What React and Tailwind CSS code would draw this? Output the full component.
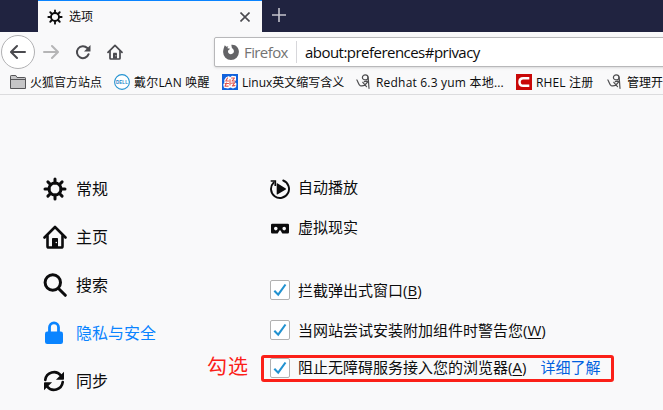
import React from "react";

const Gear = ({ className, heavy }) => (
  <svg viewBox="0 0 24 24" className={className} fill="none" stroke="currentColor" strokeLinecap="round" strokeWidth={heavy ? 3 : 2.8}>
    <circle cx="12" cy="12" r="6" />
    <path d="M12 2v4M12 18v4M2 12h4M18 12h4M4.9 4.9l2.6 2.6M16.5 16.5l2.6 2.6M4.9 19.1l2.6-2.6M16.5 7.5l2.6-2.6" />
  </svg>
);

const Home = ({ className }) => (
  <svg viewBox="0 0 24 24" className={className} fill="none" stroke="currentColor" strokeWidth="2.6" strokeLinecap="round" strokeLinejoin="round">
    <path d="M1.5 12.5L12 2l10.5 10.5" />
    <path d="M4.5 11v10.2a1.3 1.3 0 0 0 1.3 1.3h12.4a1.3 1.3 0 0 0 1.3-1.3V11" />
    <path d="M9 22v-8.3a.7.7 0 0 1 .7-.7h4.6a.7.7 0 0 1 .7.7V22z" fill="currentColor" stroke="none" />
    <circle cx="13.3" cy="17.5" r=".8" fill="#f9f9fa" stroke="none" />
  </svg>
);

const SearchIcon = ({ className }) => (
  <svg viewBox="0 0 24 24" className={className} fill="none" stroke="currentColor" strokeWidth="3" strokeLinecap="round">
    <circle cx="9.8" cy="9.5" r="7.7" />
    <path d="M15.5 15.5l6.8 6.8" />
  </svg>
);

const Lock = ({ className }) => (
  <svg viewBox="0 0 24 24" className={className}>
    <rect x="2" y="10.5" width="18" height="12.5" rx="2.2" fill="currentColor" />
    <path d="M6.5 12V6.3a4.5 4.5 0 0 1 9 0V12" fill="none" stroke="currentColor" strokeWidth="2.8" />
  </svg>
);

const Sync = ({ className }) => (
  <svg viewBox="0 0 24 24" className={className} fill="none" stroke="currentColor" strokeWidth="2.9">
    <path d="M2.5 10.8A9.6 9.6 0 0 1 19.5 6M21.5 13.2A9.6 9.6 0 0 1 4.5 18" strokeLinecap="round" />
    <path d="M22.9 1.8v8a.8.8 0 0 1-.8.8h-8zM1.1 22.2v-8a.8.8 0 0 1 .8-.8h8z" fill="currentColor" stroke="none" />
  </svg>
);

const Autoplay = () => (
  <svg viewBox="0 0 20 20" className="h-5 w-5" fill="none" stroke="#0c0c0d">
    <path d="M13.2 1.5a9 9 0 1 1-9.6 2.1" strokeWidth="1.9" strokeLinecap="round" />
    <path d="M.7 2h4.6v4.9" strokeWidth="1.7" />
    <path d="M6.7 4.6v10.6a.4.4 0 0 0 .6.3l8.5-5.1a.5.5 0 0 0 0-.8L7.3 4.3a.4.4 0 0 0-.6.3z" fill="#0c0c0d" stroke="none" />
  </svg>
);

const Headset = () => (
  <svg viewBox="0 0 20 20" className="h-5 w-5">
    <path fill="#0c0c0d" fillRule="evenodd" d="M2.3 5.8h15.4a1.3 1.3 0 0 1 1.3 1.3v7.2a1.3 1.3 0 0 1-1.3 1.3h-4.6a1.3 1.3 0 0 1-1.1-.7l-1.1-2a1 1 0 0 0-1.8 0l-1.1 2a1.3 1.3 0 0 1-1.1.7H2.3A1.3 1.3 0 0 1 1 14.3V7.1a1.3 1.3 0 0 1 1.3-1.3zM5.8 8.8a1.8 1.8 0 1 0 0 3.6 1.8 1.8 0 0 0 0-3.6zm8.4 0a1.8 1.8 0 1 0 0 3.6 1.8 1.8 0 0 0 0-3.6z" />
  </svg>
);

const Arrow = ({ className }) => (
  <svg viewBox="0 0 16 16" className={className} fill="none" stroke="currentColor" strokeWidth="2" strokeLinecap="round" strokeLinejoin="round">
    <path d="M15 8H1.5M7 2L1 8l6 6" />
  </svg>
);

const Reload = () => (
  <svg viewBox="0 0 16 16" className="h-4 w-4 text-[#4a4a4f]" fill="none" stroke="currentColor" strokeWidth="2">
    <path d="M13.6 10.2A6 6 0 1 1 12.3 4" strokeLinecap="round" />
    <path d="M15.5 1v6a.5.5 0 0 1-.5.5H9z" fill="currentColor" stroke="none" />
  </svg>
);

const FirefoxMark = () => (
  <svg viewBox="0 0 16 16" className="h-4 w-4 shrink-0">
    <path fill="#636366" fillRule="evenodd" d="M1.8 1.2l1.6 1.5 2-.5C4.8 3 4.5 3.6 4.5 4.2l2.7.5-1.8 1.6c-.6.7-.5 2.2.3 3 1.5 1.5 4.5.9 5.1-1.3.4-1.6-.3-3-1.9-4L8.3.8C13 .2 16 4 15.9 8A7.9 7.9 0 0 1 8 16 7.9 7.9 0 0 1 .1 8c0-2 .8-4.8 1.7-6.8z" />
  </svg>
);

const Folder = () => (
  <svg viewBox="0 0 16 14" className="h-[14px] w-4 shrink-0" fill="#c5c5c7" stroke="#555558">
    <path d="M.5 13.5V1.2a.7.7 0 0 1 .7-.7h4.6L7 2.5h7.8a.7.7 0 0 1 .7.7v10.3z" />
    <path d="M1 4.5h14" />
  </svg>
);

const Dell = () => (
  <svg viewBox="0 0 16 16" className="h-4 w-4 shrink-0">
    <circle cx="8" cy="8" r="7.4" fill="#fff" stroke="#2493d1" strokeWidth="1.1" />
    <text x="8" y="9.8" textAnchor="middle" textLength="12" lengthAdjust="spacingAndGlyphs" fontSize="4.8" fontWeight="700" fontFamily="Liberation Sans, sans-serif" fill="#1784c7">DELL</text>
  </svg>
);

const BlueSite = () => (
  <svg viewBox="0 0 16 16" className="h-4 w-4 shrink-0" fill="none" strokeLinecap="round" strokeLinejoin="round">
    <path fill="#1262dc" d="M0 0h16v16H0z" />
    <path fill="#fff" d="M4 3.2L7 2l1 1.2L10 1.8l4 .4v4L12.5 8l2 1.5-.5 3.8-3 1.2-2.5-1-2.5 1-4-.7-.8-3L2.5 8l-.3-2z" />
    <path stroke="#e0524c" strokeWidth="1.1" d="M5.5 4L3.8 7h2.7M3 9.5h3.5M4.5 9L3 12.3l3.2-.2M9.5 4h3l-2.5 3h3M9.3 9.3l3.4-.6-2.3 3.3 2.6-.4M8 5.5v5.5" />
  </svg>
);

const Figure = () => (
  <svg viewBox="0 0 16 16" className="h-4 w-4 shrink-0" fill="none" stroke="#4e4e50" strokeWidth="1.2" strokeLinecap="round">
    <ellipse cx="9.2" cy="3.4" rx="2.8" ry="2.5" />
    <path d="M12 2.8c.6 3 .5 6.5 1 11.5M8.3 7.6l3.8-.6M11.8 7.6c-2 3-4.6 5-7.6 4C2.6 11 2.2 8 .9 6M6.8 8.3l3.7 4.3" />
  </svg>
);

const CSite = () => (
  <svg viewBox="0 0 16 16" className="h-4 w-4 shrink-0">
    <path fill="#c90808" d="M0 0h16v16H0z" />
    <path d="M13.3 4.2H7.2C4.7 4.2 3.5 5.8 3.5 8s1.2 3.8 3.7 3.8h6.1" fill="none" stroke="#fff" strokeWidth="2.5" />
  </svg>
);

const Checkbox = () => (
  <span className="flex h-5 w-5 shrink-0 items-center justify-center rounded-[2px] border border-[#b1b1b1] bg-white">
    <svg viewBox="0 0 16 16" className="h-4 w-4" fill="none" stroke="#2292d0" strokeWidth="2.1">
      <path d="M2.3 8.7l3.9 4L13.5 2.5" />
    </svg>
  </span>
);

const bookmarks = [
  { icon: <Folder />, label: "火狐官方站点", cls: "w-[104px]" },
  { icon: <Dell />, label: "戴尔LAN 唤醒", cls: "w-[108px] tracking-[0.2px]" },
  { icon: <BlueSite />, label: "Linux英文缩写含义", cls: "w-[134px]" },
  { icon: <Figure />, label: "Redhat 6.3 yum 本地...", cls: "w-[160px] tracking-[0.2px]" },
  { icon: <CSite />, label: "RHEL 注册", cls: "w-[91px] tracking-[0.15px]" },
  { icon: <Figure />, label: "管理开始", cls: "w-[80px]" },
];

const categories = [
  { icon: <Gear className="h-6 w-6" heavy />, label: "常规" },
  { icon: <Home className="h-6 w-6" />, label: "主页" },
  { icon: <SearchIcon className="h-6 w-6" />, label: "搜索" },
  { icon: <Lock className="h-6 w-6" />, label: "隐私与安全", active: true },
  { icon: <Sync className="h-[22px] w-[22px]" />, label: "同步" },
];

export default function App() {
  return (
    <div className="flex h-[410px] w-[663px] flex-col overflow-hidden bg-[#f9f9fa] font-['Open_Sans','Noto_Sans_CJK_SC',sans-serif] text-[#0c0c0d]">
      <header className="flex h-8 shrink-0 bg-[#202340]">
        <div className="ml-[38px] flex w-[224px] items-center border-t border-[#0a84ff] bg-[#f9f9fa] pr-[12px] pl-[9px]">
          <Gear className="h-4 w-4" />
          <span className="ml-[6px] flex-1 text-xs">选项</span>
          <svg viewBox="0 0 10 10" className="h-[10px] w-[10px]" stroke="#4a4a4f" strokeWidth="1.6"><path d="M.5.5l9 9M9.5.5l-9 9" /></svg>
        </div>
        <svg viewBox="0 0 14 14" className="mt-2 ml-[10px] h-[14px] w-[14px]" stroke="#c3c3cc" strokeWidth="1.6"><path d="M7 0v14M0 7h14" /></svg>
      </header>

      <nav className="flex h-10 shrink-0 items-center overflow-hidden pl-px">
        <span className="flex h-[34px] w-[34px] shrink-0 items-center justify-center rounded-full border border-[#b1b1b3] bg-white text-[#4a4a4f]"><Arrow className="h-4 w-4" /></span>
        <Arrow className="ml-2 h-4 w-4 shrink-0 rotate-180 text-[#b5b5b6]" />
        <span className="ml-4 shrink-0"><Reload /></span>
        <Home className="ml-4 h-4 w-4 shrink-0 text-[#4a4a4f]" />
        <div className="ml-[91px] flex h-[30px] w-[470px] shrink-0 items-center rounded-[2px] border border-[#b8b8ba] bg-white pl-2 shadow-sm">
          <FirefoxMark />
          <span className="ml-[5px] w-[52px] text-[15px] tracking-[-0.6px] text-[#737373]">Firefox</span>
          <span className="h-[22px] w-px bg-[#d7d7db]" />
          <span className="ml-[8px] text-[15px] tracking-[-0.53px] whitespace-nowrap">about:preferences#privacy</span>
        </div>
      </nav>

      <div className="flex h-[23px] shrink-0 overflow-hidden border-b border-[#dcdcde] pl-[10px]">
        {bookmarks.map((b, i) => (
          <div key={i} className={`flex h-5 shrink-0 items-center gap-1 text-xs whitespace-nowrap ${b.cls}`}>
            {b.icon}
            <span className="pt-px">{b.label}</span>
          </div>
        ))}
      </div>

      <main className="flex flex-1">
        <aside className="w-[270px] shrink-0 pt-[70px] pl-[43px]">
          {categories.map((c) => (
            <div key={c.label} className={`flex h-12 items-center ${c.active ? "text-[#0a84ff]" : ""}`}>
              <span className="w-[33px]">{c.icon}</span>
              <span className="text-base">{c.label}</span>
            </div>
          ))}
        </aside>
        <section className="flex-1 pt-[73px] text-[15px]">
          <div className="flex h-10 items-center gap-2"><span className="pt-px"><Autoplay /></span><span className="pb-[2px]">自动播放</span></div>
          <div className="flex h-10 items-center gap-2"><Headset /><span className="pb-[2px]">虚拟现实</span></div>
          <div className="mt-[22px] flex h-10 items-center gap-2"><Checkbox /><span>拦截弹出式窗口(<u className="underline-offset-2">B</u>)</span></div>
          <div className="flex h-10 items-center gap-2"><Checkbox /><span>当网站尝试安装附加组件时警告您(<u className="underline-offset-2">W</u>)</span></div>
          <div className="relative flex h-[35px] items-center gap-2">
            <Checkbox />
            <span>阻止无障碍服务接入您的浏览器(<u className="underline-offset-2">A</u>)</span>
            <span className="ml-[6px] text-[#0060df]">详细了解</span>
            <span className="absolute top-[5px] left-[-9px] h-[27px] w-[353px] rounded-[3px] border-3 border-[#fb2018]" />
            <span className="absolute top-[3px] left-[-63px] text-xl leading-7 tracking-[1px] text-[#fb2018]">勾选</span>
          </div>
        </section>
      </main>
    </div>
  );
}
